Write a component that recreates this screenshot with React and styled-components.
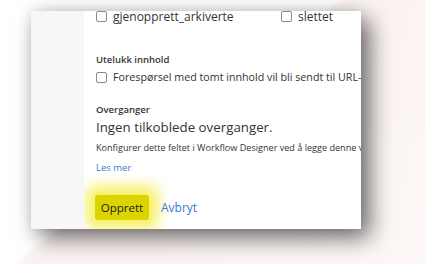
import React from 'react';
import styled, { createGlobalStyle } from 'styled-components';

const GlobalStyle = createGlobalStyle`
    html, body {
        margin: 0;
        padding: 0;
        background: #ffffff;
        overflow: hidden;
    }
`

const Scene = styled.div`
    width: 425px;
    height: 264px;
    box-sizing: border-box;
    padding: 11px 0 0 31px;
    overflow: hidden;
    background: linear-gradient(141deg, #ffffff 0, #ffffff 212px, #fbf3f1 218px, #fdf8f7 100%);
    font-family: "Open Sans", "Noto Sans", sans-serif;
    color: #333333;
`

const Panel = styled.div`
    width: 330px;
    height: 218px;
    display: flex;
    background: #ffffff;
    overflow: hidden;
    box-shadow: 9px 9px 22px rgba(0, 0, 0, 0.55), 0 0 14px rgba(0, 0, 0, 0.12);
`

const Sidebar = styled.div`
    width: 53px;
    flex: none;
    background: #f7f7f7;
`

const Content = styled.div`
    flex: 1;
    padding: 0 0 0 12px;
    display: flex;
    flex-direction: column;
    white-space: nowrap;
    overflow: hidden;
`

const CheckRow = styled.div`
    display: flex;
    align-items: center;
    height: 14px;
    margin-top: ${props => props.$top || 0}px;
`

const CheckItem = styled.label`
    display: flex;
    align-items: center;
    gap: 6px;
    width: ${props => props.$width ? `${props.$width}px` : 'auto'};
    font-size: ${props => props.$size || 11}px;
`

const Box = styled.span`
    width: 9px;
    height: 9px;
    flex: none;
    border: 1px solid #8a8a8a;
    border-radius: 2px;
    background: #ffffff;
`

const Heading = styled.div`
    font-size: 9.5px;
    font-weight: 600;
    color: #333333;
    margin-top: ${props => props.$top}px;
    line-height: 12px;
`

const Body = styled.div`
    font-size: ${props => props.$size}px;
    margin-top: ${props => props.$top}px;
    line-height: 14px;
`

const Link = styled.a`
    font-size: 9.5px;
    color: #3b78d4;
    margin-top: 7px;
    line-height: 12px;
    text-decoration: none;
`

const Actions = styled.div`
    display: flex;
    align-items: center;
    gap: 12px;
    margin-top: 21px;
`

const PrimaryButton = styled.button`
    width: 54px;
    height: 25px;
    border: none;
    border-radius: 3px;
    background: #dcd400;
    color: #222222;
    font-family: inherit;
    font-size: 11.5px;
    padding: 0;
    margin-left: -1px;
    box-shadow: 0 0 14px 9px rgba(242, 234, 30, 0.7);
`

const TextButton = styled.span`
    font-size: 12px;
    color: #3b78d4;
`

export default function App() {
    return (
        <>
            <GlobalStyle />
            <Scene>
                <Panel>
                    <Sidebar />
                    <Content>
                        <CheckRow $top={-2}>
                            <CheckItem $width={185} $size={12}><Box />gjenopprett_arkiverte</CheckItem>
                            <CheckItem $size={12}><Box />slettet</CheckItem>
                        </CheckRow>
                        <Heading $top={31}>Utelukk innhold</Heading>
                        <CheckRow $top={4}>
                            <CheckItem $size={10.7}><Box />Forespørsel med tomt innhold vil bli sendt til URL-en</CheckItem>
                        </CheckRow>
                        <Heading $top={20}>Overganger</Heading>
                        <Body $size={13.3} $top={4}>Ingen tilkoblede overganger.</Body>
                        <Body $size={9.1} $top={7}>Konfigurer dette feltet i Workflow Designer ved å legge denne verdien</Body>
                        <Link href="#">Les mer</Link>
                        <Actions>
                            <PrimaryButton>Opprett</PrimaryButton>
                            <TextButton>Avbryt</TextButton>
                        </Actions>
                    </Content>
                </Panel>
            </Scene>
        </>
    )
}
